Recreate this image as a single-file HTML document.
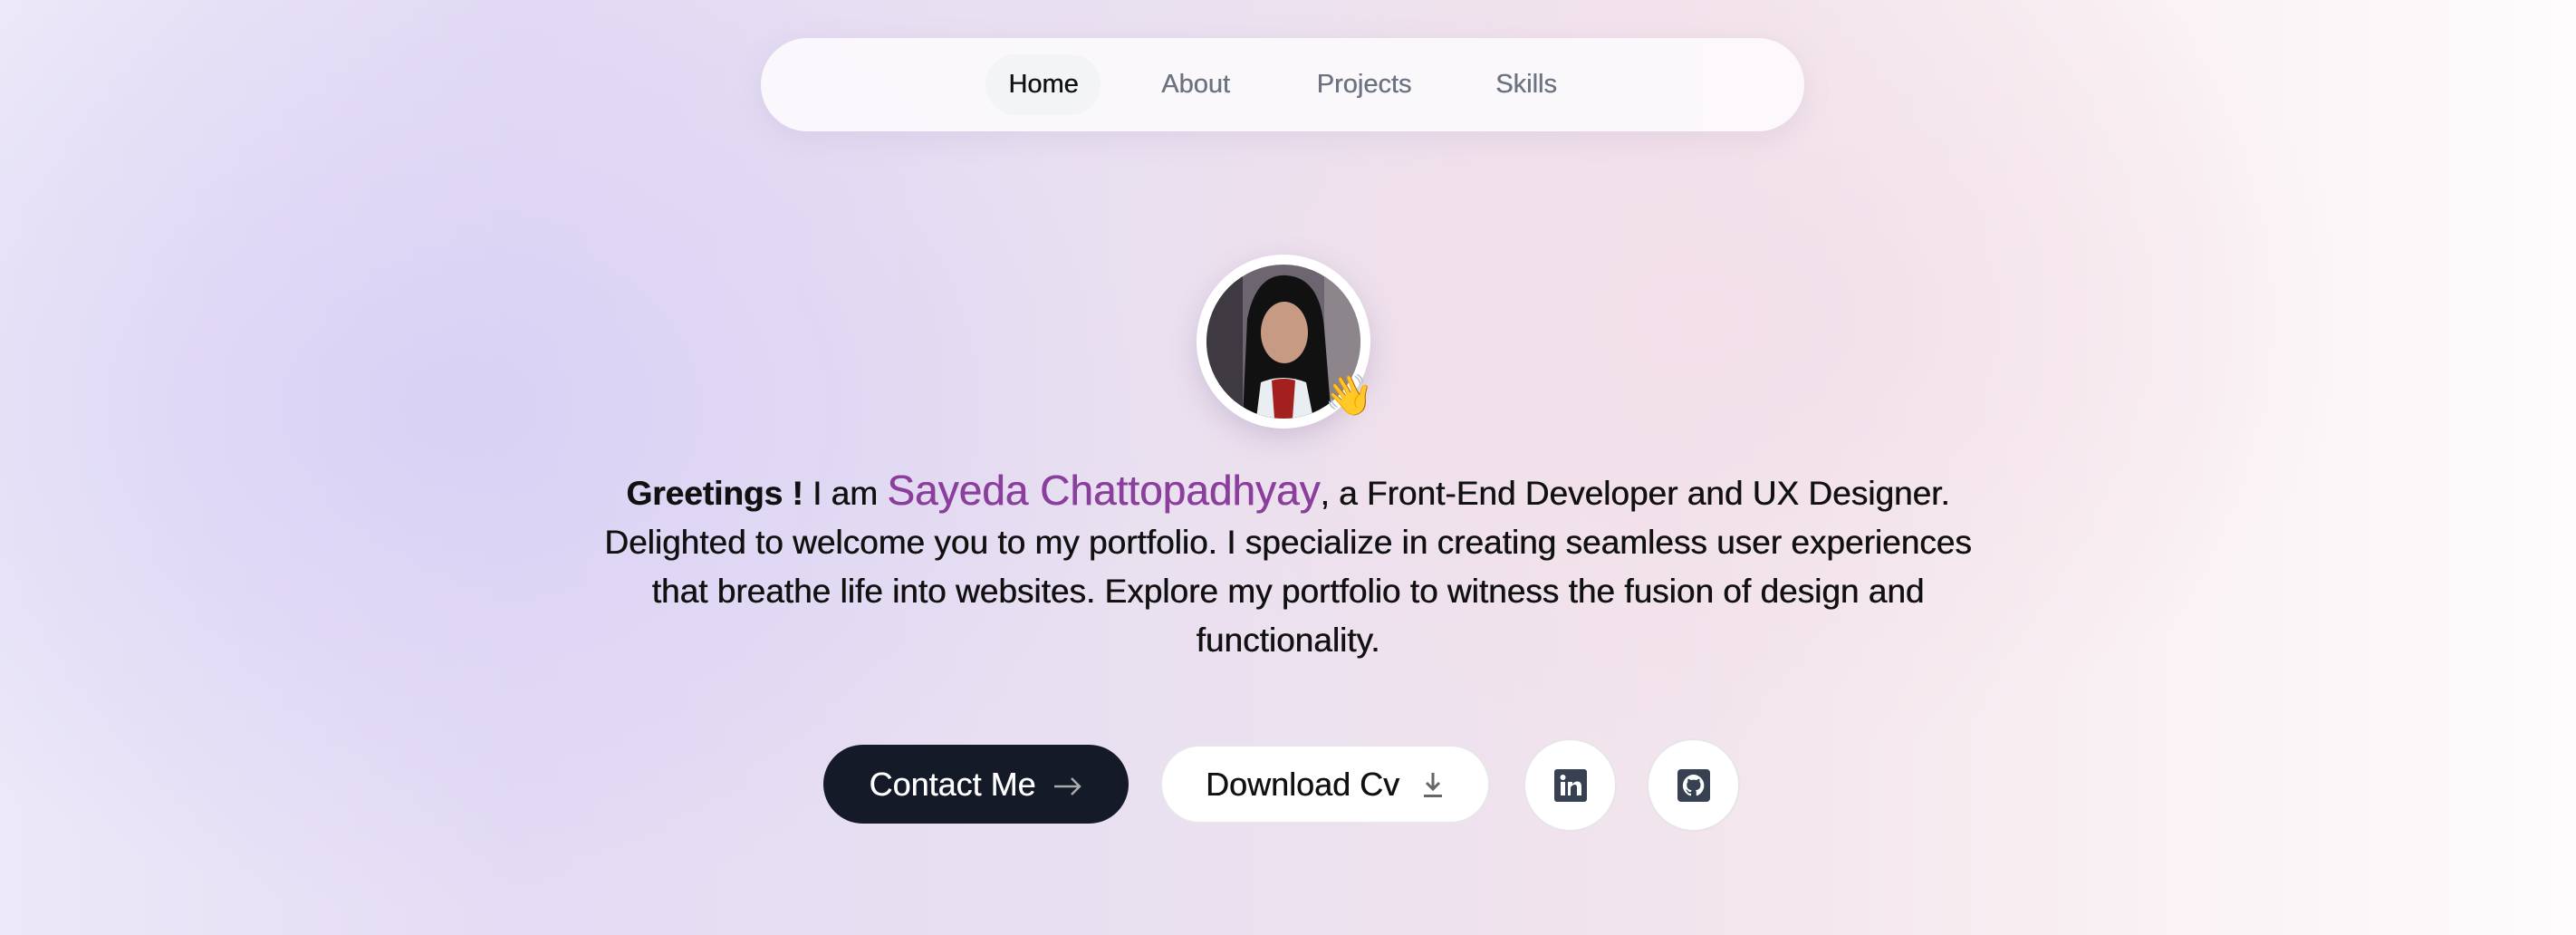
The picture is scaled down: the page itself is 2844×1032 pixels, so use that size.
<!DOCTYPE html>
<html><head><meta charset="utf-8"><style>
html,body{margin:0;padding:0}
body{width:2844px;height:1032px;overflow:hidden;position:relative;font-family:"Liberation Sans",sans-serif;
background:
radial-gradient(ellipse 1100px 800px at 500px 450px,rgba(216,208,245,0.9),rgba(216,208,245,0) 70%),
radial-gradient(ellipse 1000px 700px at 1900px 350px,rgba(242,222,232,0.9),rgba(242,222,232,0) 70%),
linear-gradient(90deg,#ece8f8 0%,#e4dcf4 20%,#e9e0f0 45%,#f2e4ec 65%,#f9f0f3 82%,#fefcfd 100%);}
.nav{position:absolute;left:840px;top:42px;width:1152px;height:103px;border-radius:52px;background:rgba(252,250,253,0.93);box-shadow:0 8px 30px rgba(150,130,180,0.15)}
.nav span{position:absolute;top:0;line-height:103px;font-size:29px;color:#6b7280;transform:translateX(-50%);text-shadow:0.4px 0 0 currentColor}
.home{position:absolute;left:248px;top:18px;width:127px;height:67px;border-radius:34px;background:#f3f4f6}
.avatar{position:absolute;left:1321px;top:281px;width:192px;height:192px;border-radius:50%;background:#fff;box-shadow:0 10px 30px rgba(120,100,150,0.25)}
.photo{position:absolute;left:11px;top:11px;width:170px;height:170px;border-radius:50%;overflow:hidden}
.wave{position:absolute;left:1462px;top:410px;font-size:44px}
.txt{position:absolute;left:422px;width:2000px;top:514px;text-align:center;font-size:37px;line-height:54px;color:#111;text-shadow:0.5px 0 0 #111}
.name{color:#8b3f9d;font-size:46px;text-shadow:0.5px 0 0 #8b3f9d}
.btn{position:absolute;top:822px;height:87px;border-radius:44px;font-size:36px;line-height:87px;text-align:center;box-sizing:border-box;text-shadow:0.4px 0 0 currentColor}
.c{left:909px;width:337px;background:#141a28;color:#fff}
.d{left:1281px;width:364px;background:#fff;color:#111;border:2px solid #e8e6ea;line-height:83px}
.circ{position:absolute;top:815px;width:103px;height:103px;border-radius:50%;background:#fff;border:2px solid #e6e4e8;box-sizing:border-box}
</style></head><body>
<div class="nav"><div class="home"></div>
<span style="left:312px;color:#111">Home</span>
<span style="left:480px">About</span>
<span style="left:666px">Projects</span>
<span style="left:845px">Skills</span>
</div>
<div class="avatar"><div class="photo">
<svg width="170" height="170" viewBox="0 0 170 170">
<rect width="170" height="170" fill="#6d6670"/>
<rect x="0" y="0" width="40" height="170" fill="#3f3a42"/>
<rect x="130" y="0" width="40" height="170" fill="#8d858c"/>
<path d="M40 170 L45 60 Q55 10 88 12 Q125 14 130 70 L138 170Z" fill="#111"/>
<ellipse cx="86" cy="75" rx="26" ry="34" fill="#c79a84"/>
<path d="M60 130 Q85 120 110 130 L118 170 L55 170Z" fill="#e9eef2"/>
<path d="M72 128 Q86 124 98 128 L95 170 L75 170Z" fill="#a3201f"/>
</svg></div></div>
<div class="wave">👋</div>
<div class="txt"><b>Greetings !</b> I am <span class="name">Sayeda Chattopadhyay</span>, a Front-End Developer and UX Designer.<br>Delighted to welcome you to my portfolio. I specialize in creating seamless user experiences<br>that breathe life into websites. Explore my portfolio to witness the fusion of design and<br>functionality.</div>
<div class="btn c">Contact Me <svg width="34" height="24" viewBox="0 0 34 24" style="vertical-align:-2px;margin-left:8px"><path d="M2 12h28M21 3l9 9-9 9" stroke="#aaa" stroke-width="2.5" fill="none"/></svg></div>
<div class="btn d">Download Cv <svg width="26" height="32" viewBox="0 0 26 32" style="vertical-align:-4px;margin-left:14px"><path d="M13 3v18M6 14l7 7 7-7" stroke="#666" stroke-width="3" fill="none"/><rect x="3" y="27" width="20" height="3" fill="#666"/></svg></div>
<div class="circ" style="left:1682px"><svg width="36" height="36" viewBox="0 0 36 36" style="position:absolute;left:32px;top:32px"><rect width="36" height="36" rx="3" fill="#374151"/><rect x="7" y="14" width="5" height="15" fill="#fff"/><circle cx="9.5" cy="9" r="3" fill="#fff"/><path d="M15 14h5v2.5q2-3 5.5-3 4.5 0 4.5 6V29h-5v-9q0-3-2.5-3T18 20v9h-3z" fill="#fff"/></svg></div>
<div class="circ" style="left:1818px"><svg width="36" height="36" viewBox="0 0 36 36" style="position:absolute;left:32px;top:32px"><rect width="36" height="36" rx="4" fill="#374151"/><path d="M18 6a12 12 0 0 0-3.8 23.4c.6.1.8-.3.8-.6v-2.2c-3.3.7-4-1.6-4-1.6-.6-1.4-1.4-1.8-1.4-1.800-1.1-.7.1-.7.1-.7 1.2.1 1.8 1.2 1.8 1.2 1.1 1.8 2.8 1.3 3.5 1 .1-.8.4-1.3.8-1.6-2.7-.3-5.5-1.300-5.5-5.9 0-1.3.5-2.4 1.2-3.2-.1-.3-.5-1.5.1-3.2 0 0 1-.3 3.3 1.2a11.5 11.5 0 0 1 6 0c2.3-1.5 3.3-1.2 3.3-1.2.6 1.7.2 2.9.1 3.2.8.8 1.2 1.9 1.2 3.2 0 4.6-2.8 5.6-5.5 5.9.4.4.8 1.1.8 2.2v3.3c0 .3.2.7.8.6A12 12 0 0 0 18 6z" fill="#fff"/></svg></div>
</body></html>
